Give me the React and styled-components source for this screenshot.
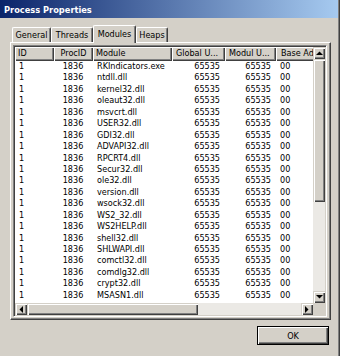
import React from "react";
import styled, { createGlobalStyle } from "styled-components";

const FONT = `"DejaVu Sans Condensed", "Liberation Sans", Arial, sans-serif`;

const GlobalStyle = createGlobalStyle`
  html, body { margin: 0; padding: 0; background: #d4d0c8; }
  #root { width: 340px; height: 356px; overflow: hidden; }
`;

const Window = styled.div`
  box-sizing: border-box;
  width: 340px;
  height: 356px;
  background: #d4d0c8;
  border-right: 1px solid #404040;
  box-shadow: inset -1px 0 0 #808080;
  display: flex;
  flex-direction: column;
  font-family: ${FONT};
  font-size: 9px;
  color: #000;
`;

const TitleBar = styled.div`
  box-sizing: border-box;
  height: 18px;
  margin-right: 1px;
  flex: none;
  background: linear-gradient(to right, #0a246a, #a6caf0);
  color: #fff;
  font-weight: bold;
  font-size: 9.2px;
  line-height: 18px;
  padding: 1px 0 0 4px;
  white-space: nowrap;
`;

const Body = styled.div`
  flex: 1;
  display: flex;
  flex-direction: column;
  padding: 7px 0 0 10px;
`;

const TabStrip = styled.div`
  display: flex;
  align-items: flex-end;
  height: 17px;
  padding-left: 2px;
`;

const Tab = styled.div`
  box-sizing: border-box;
  flex: none;
  width: ${(p) => p.$w}px;
  height: ${(p) => (p.$active ? 18 : 15)}px;
  margin-bottom: ${(p) => (p.$active ? -1 : 0)}px;
  position: relative;
  z-index: ${(p) => (p.$active ? 2 : 1)};
  background: #d4d0c8;
  border: 1px solid #fff;
  border-bottom: none;
  border-right-color: #404040;
  border-radius: 2px 2px 0 0;
  box-shadow: inset -1px 0 0 #808080;
  text-align: center;
  padding-top: ${(p) => (p.$active ? 2.5 : 1.5)}px;
  line-height: 10px;
  white-space: nowrap;
`;

const TabPanel = styled.div`
  box-sizing: border-box;
  width: 321px;
  height: 278px;
  border: 1px solid;
  border-color: #fff #404040 #404040 #fff;
  box-shadow: inset -1px -1px 0 #808080;
  padding: 2px 3px 2px 2px;
`;

const ListView = styled.div`
  box-sizing: border-box;
  width: 314px;
  height: 272px;
  border: 1px solid;
  border-color: #808080 #fff #fff #808080;
  box-shadow: inset 1px 1px 0 #404040, inset -1px -1px 0 #d4d0c8;
  padding: 1px;
  background: #fff;
  display: grid;
  grid-template-columns: minmax(0, 1fr) 12px;
  grid-template-rows: minmax(0, 1fr) 12px;
`;

const Report = styled.div`
  overflow: hidden;
  display: flex;
  flex-direction: column;
  background: #fff;
`;

const HeaderRow = styled.div`
  display: flex;
  flex: none;
  height: 14px;
`;

const HeaderCell = styled.div`
  box-sizing: border-box;
  flex: none;
  width: ${(p) => p.$w}px;
  height: 14px;
  background: #d4d0c8;
  box-shadow: inset 1px 1px 0 #fff, inset -1px -1px 0 #404040,
    inset -2px -2px 0 #808080;
  padding: 0 4px 0 ${(p) => p.$pl}px;
  text-align: ${(p) => p.$align};
  line-height: 13px;
  white-space: nowrap;
  overflow: hidden;
`;

const Row = styled.div`
  display: flex;
  flex: none;
  height: 11.45px;
  line-height: 11.45px;
`;

const Cell = styled.div`
  box-sizing: border-box;
  flex: none;
  width: ${(p) => p.$w}px;
  padding: 0 5px 0 4px;
  text-align: ${(p) => p.$align};
  white-space: nowrap;
  overflow: hidden;
`;

const ScrollBar = styled.div`
  display: flex;
  flex-direction: ${(p) => (p.$vertical ? "column" : "row")};
  background: #ebe9e5;
  overflow: hidden;
`;

const raised = `
  background: #d4d0c8;
  box-shadow: inset 1px 1px 0 #d4d0c8, inset 2px 2px 0 #fff,
    inset -1px -1px 0 #404040, inset -2px -2px 0 #808080;
`;

const ScrollButton = styled.div`
  box-sizing: border-box;
  flex: none;
  width: 12px;
  height: 12px;
  ${raised}
  display: flex;
  align-items: center;
  justify-content: center;
`;

const Thumb = styled.div`
  flex: none;
  ${(p) => (p.$vertical ? `width: 12px; height: ${p.$size}px;` : `height: 12px; width: ${p.$size}px;`)}
  ${raised}
`;

const Track = styled.div`
  flex: 1;
`;

const Grip = styled.div`
  background: #d4d0c8;
`;

const Footer = styled.div`
  display: flex;
  justify-content: flex-end;
  padding: 6px 10px 0 0;
`;

const Button = styled.button`
  box-sizing: border-box;
  width: 72px;
  height: 19px;
  padding: 0;
  border: 1px solid #000;
  background: #d4d0c8;
  box-shadow: inset 1px 1px 0 #fff, inset -1px -1px 0 #404040,
    inset -2px -2px 0 #808080;
  font-family: ${FONT};
  font-size: 9px;
  color: #000;
  line-height: 16px;
`;

const Arrow = ({ dir }) => {
  const pts = {
    up: "0,4 7,4 3.5,0.5",
    down: "0,0 7,0 3.5,3.5",
    left: "4,0 4,7 0.5,3.5",
    right: "0,0 0,7 3.5,3.5",
  }[dir];
  const vertical = dir === "up" || dir === "down";
  return (
    <svg width={vertical ? 7 : 4} height={vertical ? 4 : 7} viewBox={vertical ? "0 0 7 4" : "0 0 4 7"}>
      <polygon points={pts} fill="#000" />
    </svg>
  );
};

const columns = [
  { key: "id", title: "ID", w: 39, align: "left", hAlign: "left", hpl: 3 },
  { key: "pid", title: "ProcID", w: 39, align: "center", hAlign: "center", hpl: 4 },
  { key: "mod", title: "Module", w: 79, align: "left", hAlign: "left", hpl: 3 },
  { key: "glob", title: "Global U...", w: 53, align: "right", hAlign: "left", hpl: 4 },
  { key: "modu", title: "Modul U...", w: 51, align: "right", hAlign: "left", hpl: 4 },
  { key: "base", title: "Base Address", w: 80, align: "left", hAlign: "left", hpl: 5 },
];

const modules = [
  "RKIndicators.exe",
  "ntdll.dll",
  "kernel32.dll",
  "oleaut32.dll",
  "msvcrt.dll",
  "USER32.dll",
  "GDI32.dll",
  "ADVAPI32.dll",
  "RPCRT4.dll",
  "Secur32.dll",
  "ole32.dll",
  "version.dll",
  "wsock32.dll",
  "WS2_32.dll",
  "WS2HELP.dll",
  "shell32.dll",
  "SHLWAPI.dll",
  "comctl32.dll",
  "comdlg32.dll",
  "crypt32.dll",
  "MSASN1.dll",
];

const rows = modules.map((m) => ({
  id: "1",
  pid: "1836",
  mod: m,
  glob: "65535",
  modu: "65535",
  base: "00",
}));

const tabs = [
  { label: "General", w: 39 },
  { label: "Threads", w: 42 },
  { label: "Modules", w: 43, active: true },
  { label: "Heaps", w: 32 },
];

export default function App() {
  return (
    <>
      <GlobalStyle />
      <Window>
        <TitleBar>Process Properties</TitleBar>
        <Body>
          <TabStrip>
            {tabs.map((t) => (
              <Tab key={t.label} $w={t.w} $active={t.active}>
                {t.label}
              </Tab>
            ))}
          </TabStrip>
          <TabPanel>
            <ListView>
              <Report>
                <HeaderRow>
                  {columns.map((c) => (
                    <HeaderCell key={c.key} $w={c.w} $align={c.hAlign} $pl={c.hpl}>
                      {c.title}
                    </HeaderCell>
                  ))}
                </HeaderRow>
                {rows.map((r, i) => (
                  <Row key={i}>
                    {columns.map((c) => (
                      <Cell key={c.key} $w={c.w} $align={c.align}>
                        {r[c.key]}
                      </Cell>
                    ))}
                  </Row>
                ))}
              </Report>
              <ScrollBar $vertical>
                <ScrollButton>
                  <Arrow dir="up" />
                </ScrollButton>
                <Thumb $vertical $size={143} />
                <Track />
                <ScrollButton>
                  <Arrow dir="down" />
                </ScrollButton>
              </ScrollBar>
              <ScrollBar>
                <ScrollButton>
                  <Arrow dir="left" />
                </ScrollButton>
                <Thumb $size={171} />
                <Track />
                <ScrollButton>
                  <Arrow dir="right" />
                </ScrollButton>
              </ScrollBar>
              <Grip />
            </ListView>
          </TabPanel>
          <Footer>
            <Button>OK</Button>
          </Footer>
        </Body>
      </Window>
    </>
  );
}
